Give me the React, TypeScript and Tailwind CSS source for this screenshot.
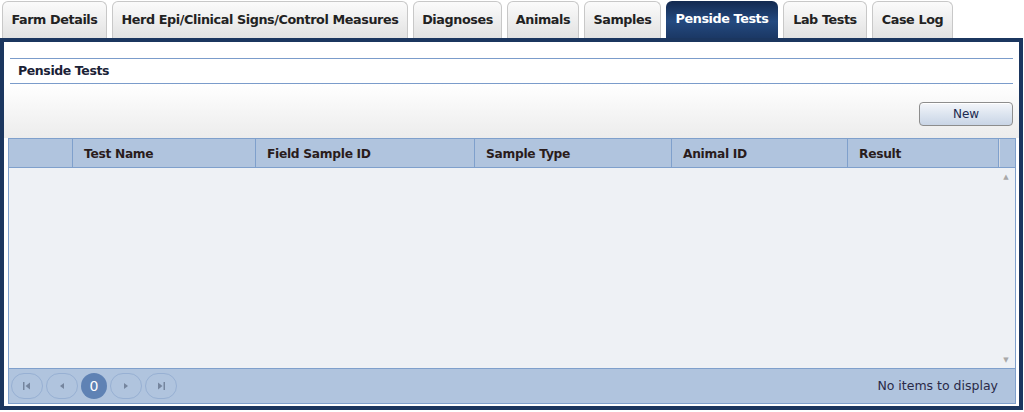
import React from "react";

const tabs = [
  { label: "Farm Details", w: "w-[105px]" },
  { label: "Herd Epi/Clinical Signs/Control Measures", w: "w-[296px]" },
  { label: "Diagnoses", w: "w-[89px]" },
  { label: "Animals", w: "w-[72px]" },
  { label: "Samples", w: "w-[77px]" },
  { label: "Penside Tests", w: "w-[112px]", active: true },
  { label: "Lab Tests", w: "w-[84px]" },
  { label: "Case Log", w: "w-[81px]" },
];

const columns = [
  { label: "", w: "w-[64px]" },
  { label: "Test Name", w: "w-[183px]" },
  { label: "Field Sample ID", w: "w-[219px]" },
  { label: "Sample Type", w: "w-[197px]" },
  { label: "Animal ID", w: "w-[176px]" },
  { label: "Result", w: "w-[151px]" },
];

function PagerButton({ children, active }: { children: React.ReactNode; active?: boolean }) {
  return (
    <div
      className={
        active
          ? "flex h-[26px] w-[26px] items-center justify-center rounded-full bg-[#5f82b4] text-[14px] text-white"
          : "flex h-[26px] w-[32px] items-center justify-center rounded-[13px] border border-[#97b0d3] text-[#75859e]"
      }
    >
      {children}
    </div>
  );
}

export default function App() {
  return (
    <div className="h-[412px] w-[1024px] bg-white font-['DejaVu_Sans',sans-serif] text-[#1e1e1e]">
      <div className="flex h-[38px] items-end gap-[5px] pl-[2px]">
        {tabs.map((t) =>
          t.active ? (
            <div
              key={t.label}
              className={`${t.w} flex h-[37px] items-center justify-center rounded-t-[6px] bg-[linear-gradient(#13294f,#244a80_55%,#1b3865)] pb-[1px] text-[12.75px] font-bold tracking-[-0.4px] text-white`}
            >
              {t.label}
            </div>
          ) : (
            <div
              key={t.label}
              className={`${t.w} flex h-[37px] items-center justify-center rounded-t-[6px] border border-b-0 border-[#c8c8c8] bg-[linear-gradient(#fbfbfb,#e2e2e2)] pb-[1px] text-[12.75px] font-bold tracking-[-0.4px] text-[#222]`}
            >
              {t.label}
            </div>
          )
        )}
      </div>

      <div className="h-[372px] w-[1023px] border-4 border-[#1b365f] bg-white">
        <div className="h-[16px]" />
        <div className="mx-[6px] flex h-[26px] items-center border-y border-[#7b9ccb] pl-[8px] text-[12.5px] font-bold tracking-[-0.4px] text-[#1a2236]">
          Penside Tests
        </div>
        <div className="flex h-[54px] items-center justify-end bg-[linear-gradient(#ffffff,#ececec)] pr-[6px] pt-[5px]">
          <button className="h-[24px] w-[94px] rounded-[4px] border border-[#8d8d8d] bg-[linear-gradient(#f4f6fa,#dde5f0_50%,#c9d5e6)] text-[12px] text-[#1c2a50] shadow-[inset_0_1px_0_#fff]">
            New
          </button>
        </div>

        <div className="ml-[4px] mr-[3px] border border-[#7fa0cc]">
          <div className="flex h-[29px] border-b border-[#7fa0cc] bg-[#b0c4de] text-[12.25px] font-bold tracking-[-0.3px] text-[#2a1c1c]">
            {columns.map((c, i) => (
              <div
                key={i}
                className={`${c.w} flex items-center border-r border-[#7fa0cc] pl-[11px] pt-[3px]`}
              >
                {c.label}
              </div>
            ))}
            <div className="flex-1 border-l border-[#d5dbe4]" />
          </div>

          <div className="flex h-[200px] bg-[#eef1f5]">
            <div className="flex-1" />
            <div className="flex w-[18px] flex-col items-center justify-between pb-[4px] pt-[6px] text-[7px] leading-none text-[#a8a8a8]">
              <span>▲</span>
              <span>▼</span>
            </div>
          </div>

          <div className="flex h-[35px] items-center border-t border-[#7fa0cc] bg-[#b0c4de] pl-[2px] pr-[17px]">
            <div className="flex items-center gap-[3px]">
              <PagerButton>
                <svg width="10" height="10" viewBox="0 0 10 10" fill="currentColor">
                  <rect x="1" y="1" width="1.5" height="8" />
                  <path d="M8 1.5 L3.5 5 L8 8.5 Z" />
                </svg>
              </PagerButton>
              <PagerButton>
                <svg width="10" height="10" viewBox="0 0 10 10" fill="currentColor">
                  <path d="M7 2 L3 5 L7 8 Z" />
                </svg>
              </PagerButton>
              <PagerButton active>0</PagerButton>
              <PagerButton>
                <svg width="10" height="10" viewBox="0 0 10 10" fill="currentColor">
                  <path d="M3 2 L7 5 L3 8 Z" />
                </svg>
              </PagerButton>
              <PagerButton>
                <svg width="10" height="10" viewBox="0 0 10 10" fill="currentColor">
                  <path d="M2 1.5 L6.5 5 L2 8.5 Z" />
                  <rect x="7.5" y="1" width="1.5" height="8" />
                </svg>
              </PagerButton>
            </div>
            <div className="ml-auto text-[12.5px] text-[#2a2a48]">No items to display</div>
          </div>
        </div>
      </div>
    </div>
  );
}
